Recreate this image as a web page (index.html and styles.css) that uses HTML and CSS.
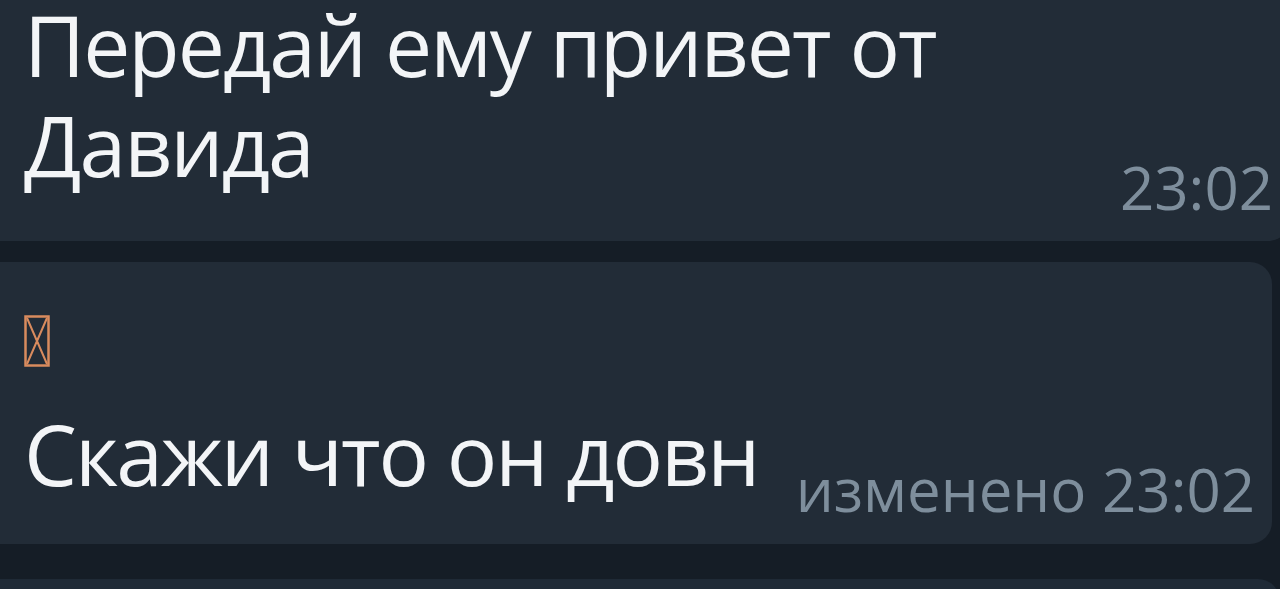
FILE: index.html
```html
<!DOCTYPE html>
<html>
<head>
  <meta charset="utf-8">
  <title>Чат</title>
  <link rel="stylesheet" href="styles.css">
</head>
<body>

<div class="chat">
  <!-- first message -->
  <div class="bubble bubble-first">
    <div class="text">Передай ему привет от<br>Давида</div>
    <div class="meta">23:02</div>
  </div>

  <!-- edited message with missing emoji -->
  <div class="bubble bubble-edited">
    <div class="body">
      <svg class="tofu" width="26" height="52" viewBox="0 0 26 52">
        <rect x="1.5" y="1.5" width="23" height="49" fill="none" stroke="#d98b5e" stroke-width="2.5"/>
        <path d="M3 3 L23 49 M23 3 L3 49" stroke="#d98b5e" stroke-width="2" fill="none"/>
      </svg>
      <div class="row">
        <div class="text">Скажи что он довн</div>
        <div class="meta">изменено 23:02</div>
      </div>
    </div>
  </div>

  <div class="bubble bubble-next"></div>
</div>

</body>
</html>
```

FILE: styles.css
```css
html, body {
  margin: 0;
  height: 100%;
  overflow: hidden;
}

body {
  background: #151d26;
  font-family: "Open Sans", "Noto Sans", sans-serif;
  color: #f3f5f7;
}

.chat {
  display: flex;
  flex-direction: column;
  margin-top: -5px;
}

.bubble {
  background: #222c37;
  margin-left: -12px;
  padding-left: 36px;
}

.text {
  font-size: 84px;
  line-height: 100px;
  letter-spacing: -2px;
}

.meta {
  font-size: 60px;
  line-height: 60px;
  color: #7e8e9c;
  white-space: nowrap;
}

/* first message */
.bubble-first {
  display: flex;
  align-items: flex-end;
  justify-content: space-between;
  margin-right: -10px;
  padding-right: 17px;
  padding-bottom: 24px;
  border-radius: 0 0 22px 0;
}

.bubble-first .text {
  margin-bottom: 22px;
}

/* second message */
.bubble-edited {
  margin-top: 21px;
  margin-right: 8px;
  padding-top: 53px;
  padding-right: 17px;
  padding-bottom: 25px;
  border-radius: 0 22px 22px 0;
}

.tofu {
  display: block;
  margin-bottom: 37px;
}

.row {
  display: flex;
  align-items: flex-end;
  justify-content: space-between;
}

.row .text {
  margin-bottom: 15px;
}

.bubble-next {
  margin-top: 35px;
  height: 60px;
  background: #1f2a36;
  border-radius: 0 22px 0 0;
}
```
